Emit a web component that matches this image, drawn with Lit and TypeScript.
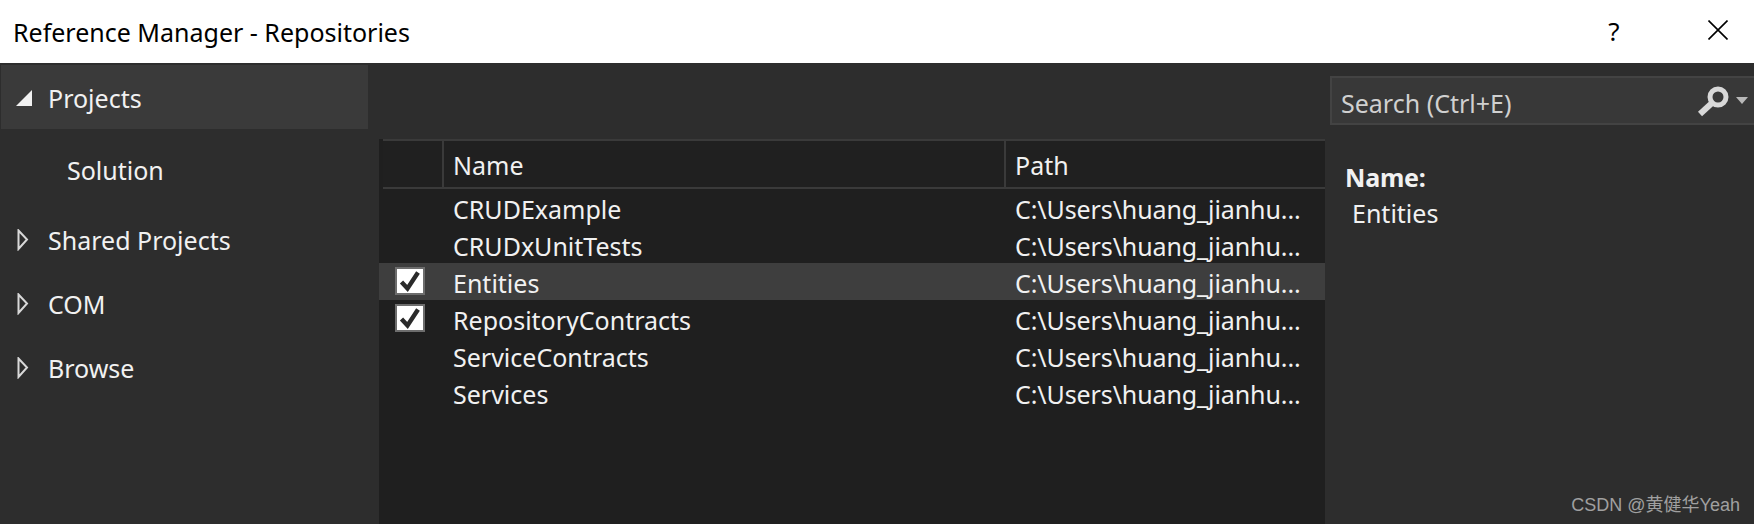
import { LitElement, html, css, svg } from "lit";
import { customElement } from "lit/decorators.js";

const refs = [
  { name: "CRUDExample", checked: false, selected: false },
  { name: "CRUDxUnitTests", checked: false, selected: false },
  { name: "Entities", checked: true, selected: true },
  { name: "RepositoryContracts", checked: true, selected: false },
  { name: "ServiceContracts", checked: false, selected: false },
  { name: "Services", checked: false, selected: false },
];

const PATH = "C:\\Users\\huang_jianhu...";

@customElement("app-root")
export class AppRoot extends LitElement {
  static styles = css`
    :host {
      display: block;
      width: 1754px;
      height: 524px;
      overflow: hidden;
      position: relative;
      font-family: "Noto Sans", "Open Sans", sans-serif;
      font-size: 25px;
      color: #f1f1f1;
      background: #2d2d2d;
    }

    .titlebar {
      height: 63px;
      background: #fff;
      color: #000;
      display: flex;
      align-items: center;
      padding: 0 20px 0 13px;
    }

    .title {
      flex: 1;
    }

    .help {
      width: 24px;
      margin-right: 82px;
      text-align: center;
      font-size: 26px;
      padding-bottom: 1px;
    }

    .close {
      width: 20px;
      height: 20px;
      margin-right: 6px;
      margin-bottom: 3px;
    }

    .main {
      height: 461px;
      display: grid;
      grid-template-columns: 379px 946px 1fr;
    }

    .side {
      padding: 2px 0 0 1px;
    }

    .side-top {
      width: 367px;
      height: 64px;
      background: #3a3a3a;
    }

    .node {
      height: 64px;
      display: flex;
      align-items: center;
      padding-left: 15px;
      box-sizing: border-box;
    }

    .side-top span,
    .node.sub span {
      padding-top: 2px;
    }

    .node .arrow {
      width: 32px;
      height: 22px;
      flex: none;
    }

    .node.sub {
      height: 79px;
      padding-left: 66px;
    }

    .center {
      display: flex;
      flex-direction: column;
      padding-top: 76px;
    }

    .list {
      flex: 1;
      background: #1f1f1f;
      padding-left: 4px;
      display: flex;
      flex-direction: column;
    }

    .head {
      display: grid;
      grid-template-columns: 61px 562px 1fr;
      height: 50px;
      box-sizing: border-box;
      border-top: 2px solid #3a3a3a;
      border-bottom: 2px solid #3a3a3a;
      background: #202020;
    }

    .head div {
      display: flex;
      align-items: center;
      padding: 2px 0 0 9px;
      border-right: 2px solid #3a3a3a;
    }

    .head div:last-child {
      border-right: none;
    }

    .row {
      display: grid;
      grid-template-columns: 60px 562px 1fr;
      height: 37px;
      margin-left: -4px;
      padding-left: 4px;
      align-items: center;
    }

    .row.selected {
      background: #3e3e3e;
    }

    .row .name {
      padding: 2px 0 0 10px;
    }

    .row .path {
      padding: 2px 0 0 10px;
      letter-spacing: -0.1px;
      white-space: nowrap;
    }

    .check {
      width: 26px;
      height: 24px;
      margin-left: 12px;
      margin-bottom: 2px;
      border: 2px solid #6d6d6d;
      background: #fff;
      display: block;
    }

    .check svg {
      display: block;
    }

    .details {
      padding: 13px 0 0 5px;
    }

    .search {
      height: 49px;
      box-sizing: border-box;
      border: 2px solid #434343;
      border-right: none;
      background: #383838;
      display: flex;
      align-items: center;
      padding-left: 9px;
      color: #d0d0d0;
    }

    .search span {
      flex: 1;
      padding-top: 4px;
    }

    .search svg {
      flex: none;
    }

    .info {
      padding: 34px 0 0 15px;
    }

    .info b {
      display: block;
      font-weight: 700;
      line-height: 36px;
      letter-spacing: -0.2px;
    }

    .info span {
      display: block;
      padding-left: 7px;
      line-height: 36px;
    }

    .mark {
      position: absolute;
      right: 14px;
      bottom: 8px;
      font-family: "Liberation Sans", "Noto Sans CJK SC", sans-serif;
      font-size: 18px;
      color: #a0a0a0;
    }
  `;

  private arrowOpen() {
    return html`<svg class="arrow" viewBox="0 0 32 22">
      <polygon points="0,20 16,20 16,4" fill="#f1f1f1" />
    </svg>`;
  }

  private arrowClosed() {
    return html`<svg class="arrow" viewBox="0 0 32 22">
      <polygon points="2.5,1.5 11,10.5 2.5,20" fill="none" stroke="#d8d8d8" stroke-width="2" />
    </svg>`;
  }

  private checkbox(row: { checked: boolean }) {
    if (!row.checked) return html`<span></span>`;
    return html`<span class="check">
      <svg width="26" height="24" viewBox="0 0 26 24">
        ${svg`<path d="M4.5 13 L10.5 19.5 L21 3.5" fill="none" stroke="#2a2a2a" stroke-width="4.4" />`}
      </svg>
    </span>`;
  }

  render() {
    return html`
      <div class="titlebar">
        <div class="title">Reference Manager - Repositories</div>
        <div class="help">?</div>
        <svg class="close" viewBox="0 0 20 20">
          <path d="M0.5 0.5 L19.5 19.5 M19.5 0.5 L0.5 19.5" stroke="#000" stroke-width="1.6" fill="none" />
        </svg>
      </div>
      <div class="main">
        <div class="side">
          <div class="node side-top">${this.arrowOpen()}<span>Projects</span></div>
          <div class="node sub"><span>Solution</span></div>
          ${["Shared Projects", "COM", "Browse"].map(
            (n) => html`<div class="node">${this.arrowClosed()}<span>${n}</span></div>`
          )}
        </div>
        <div class="center">
          <div class="list">
            <div class="head">
              <div></div>
              <div>Name</div>
              <div>Path</div>
            </div>
            ${refs.map(
              (r) => html`<div class="row ${r.selected ? "selected" : ""}">
                ${this.checkbox(r)}
                <span class="name">${r.name}</span>
                <span class="path">${PATH}</span>
              </div>`
            )}
          </div>
        </div>
        <div class="details">
          <div class="search">
            <span>Search (Ctrl+E)</span>
            <svg width="62" height="36" viewBox="0 0 62 36">
              <circle cx="26" cy="14" r="8" fill="none" stroke="#d8d8d8" stroke-width="5" />
              <path d="M20 20 L8 31" stroke="#d8d8d8" stroke-width="6" fill="none" />
              <polygon points="44,14 56,14 50,21" fill="#b8b8b8" />
            </svg>
          </div>
          <div class="info">
            <b>Name:</b>
            <span>Entities</span>
          </div>
        </div>
      </div>
      <div class="mark">CSDN @黄健华Yeah</div>
    `;
  }
}
